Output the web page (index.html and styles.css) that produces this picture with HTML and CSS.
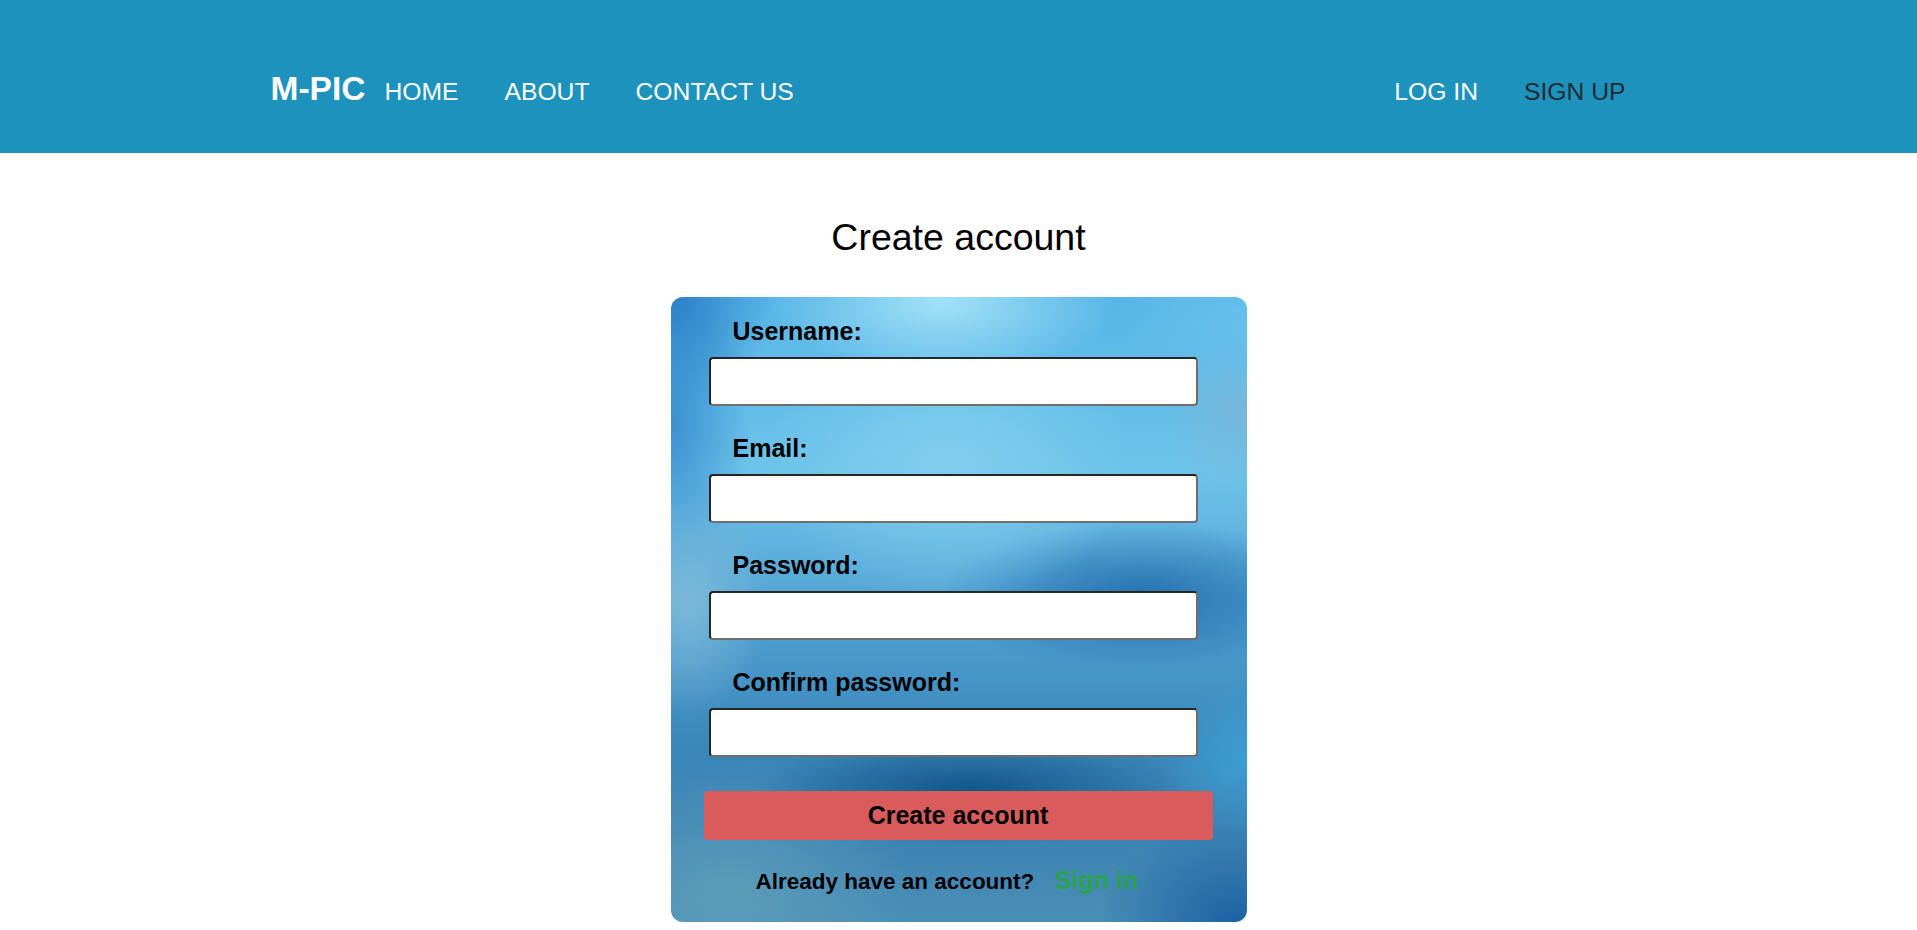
FILE: index.html
```html
<!DOCTYPE html>
<html lang="en">
<head>
<meta charset="utf-8">
<title>M-PIC - Create account</title>
<link rel="stylesheet" href="styles.css">
</head>
<body>
<header class="topbar">
  <nav class="nav">
    <div class="nav-left">
      <a class="logo" href="#">M-PIC</a>
      <ul class="links">
        <li><a href="#">HOME</a></li>
        <li><a href="#">ABOUT</a></li>
        <li><a href="#">CONTACT US</a></li>
      </ul>
    </div>
    <ul class="links links-right">
      <li><a href="#">LOG IN</a></li>
      <li><a class="active" href="#">SIGN UP</a></li>
    </ul>
  </nav>
</header>
<main class="main">
  <h1 class="title">Create account</h1>
  <form class="card">
    <div class="field">
      <label class="label" for="username">Username:</label>
      <input class="input" id="username" type="text">
    </div>
    <div class="field">
      <label class="label" for="email">Email:</label>
      <input class="input" id="email" type="email">
    </div>
    <div class="field">
      <label class="label" for="password">Password:</label>
      <input class="input" id="password" type="password">
    </div>
    <div class="field">
      <label class="label" for="confirm">Confirm password:</label>
      <input class="input" id="confirm" type="password">
    </div>
    <button class="submit" type="button">Create account</button>
    <p class="signin">Already have an account? <a class="signin-link" href="#">Sign in</a></p>
  </form>
</main>
</body>
</html>
```
FILE: styles.css
```css
* { box-sizing: border-box; }

body {
  margin: 0;
  font-family: "Liberation Sans", Arial, sans-serif;
  background: #ffffff;
  color: #000;
}

.topbar {
  background: #1c92bd;
  height: 153px;
  padding-top: 70px;
}

.nav {
  width: 1376px;
  margin: 0 auto;
  display: flex;
  justify-content: space-between;
  align-items: baseline;
}

.nav-left {
  display: flex;
  align-items: baseline;
  gap: 19px;
}

.logo {
  font-size: 33.5px;
  font-weight: bold;
  color: #fff;
  text-decoration: none;
}

.links {
  list-style: none;
  margin: 0;
  padding: 0;
  display: flex;
  align-items: baseline;
  gap: 46px;
}

.links-right {
  padding-right: 21px;
}

.links a {
  display: block;
  font-size: 24.7px;
  color: #fff;
  text-decoration: none;
}

.links a.active {
  color: #1f2a30;
}

.main {
  display: flex;
  flex-direction: column;
  align-items: center;
}

.title {
  font-size: 37.5px;
  font-weight: normal;
  margin: 63px 0 38px;
}

.card {
  width: 576px;
  height: 625px;
  border-radius: 12px;
  padding: 20px 0 0 0;
  background:
    radial-gradient(ellipse 30% 12% at 47% 1%, rgba(166,228,250,0.95), rgba(166,228,250,0)),
    radial-gradient(ellipse 32% 22% at 48% 27%, rgba(130,207,239,0.95), rgba(130,207,239,0)),
    radial-gradient(ellipse 38% 9% at 52% 79%, rgba(18,86,138,1), rgba(18,86,138,0)),
    radial-gradient(ellipse 36% 12% at 82% 48%, rgba(36,110,174,0.95), rgba(36,110,174,0)),
    radial-gradient(ellipse 14% 18% at 3% 49%, rgba(130,188,218,0.85), rgba(130,188,218,0)),
    radial-gradient(ellipse 16% 12% at 100% 74%, rgba(62,160,214,0.9), rgba(62,160,214,0)),
    radial-gradient(ellipse 24% 16% at 98% 100%, rgba(28,98,164,1), rgba(28,98,164,0)),
    radial-gradient(ellipse 32% 22% at 10% 96%, rgba(92,156,186,1), rgba(92,156,186,0)),
    radial-gradient(ellipse 18% 18% at 0% 0%, rgba(44,128,200,1), rgba(44,128,200,0)),
    radial-gradient(ellipse 14% 26% at 0% 20%, rgba(54,138,206,0.9), rgba(54,138,206,0)),
    radial-gradient(ellipse 22% 12% at 100% 4%, rgba(104,192,236,1), rgba(104,192,236,0)),
    radial-gradient(ellipse 14% 14% at 100% 18%, rgba(120,184,220,1), rgba(120,184,220,0)),
    linear-gradient(180deg, #58b6e6 0%, #6dc3e9 28%, #4f9fd0 52%, #3a87ba 72%, #3b82b3 85%, #4a8fb6 100%);
}

.field {
  margin-bottom: 28px;
}

.label {
  display: block;
  margin-left: 62px;
  font-size: 25px;
  line-height: 28px;
  font-weight: bold;
  color: #000;
}

.input {
  display: block;
  margin: 12px 0 0 38px;
  width: 489px;
  height: 49px;
  border: 2px solid;
  border-color: #262626 #6e6e6e #6e6e6e #262626;
  border-radius: 4px;
  background: #fff;
  font-size: 20px;
  padding: 0 8px;
}

.submit {
  display: block;
  margin: 34px 0 0 33px;
  width: 509px;
  height: 49px;
  border: none;
  border-radius: 4px;
  background: #d95b5b;
  color: #000;
  font-family: "Liberation Sans", Arial, sans-serif;
  font-size: 25px;
  font-weight: bold;
  padding: 0;
}

.signin {
  margin: 26px 0 0 0;
  padding-left: 85px;
  font-size: 22.5px;
  font-weight: bold;
  color: #000;
}

.signin-link {
  margin-left: 14px;
  font-size: 25px;
  color: #2aa24b;
  text-decoration: none;
}
```
